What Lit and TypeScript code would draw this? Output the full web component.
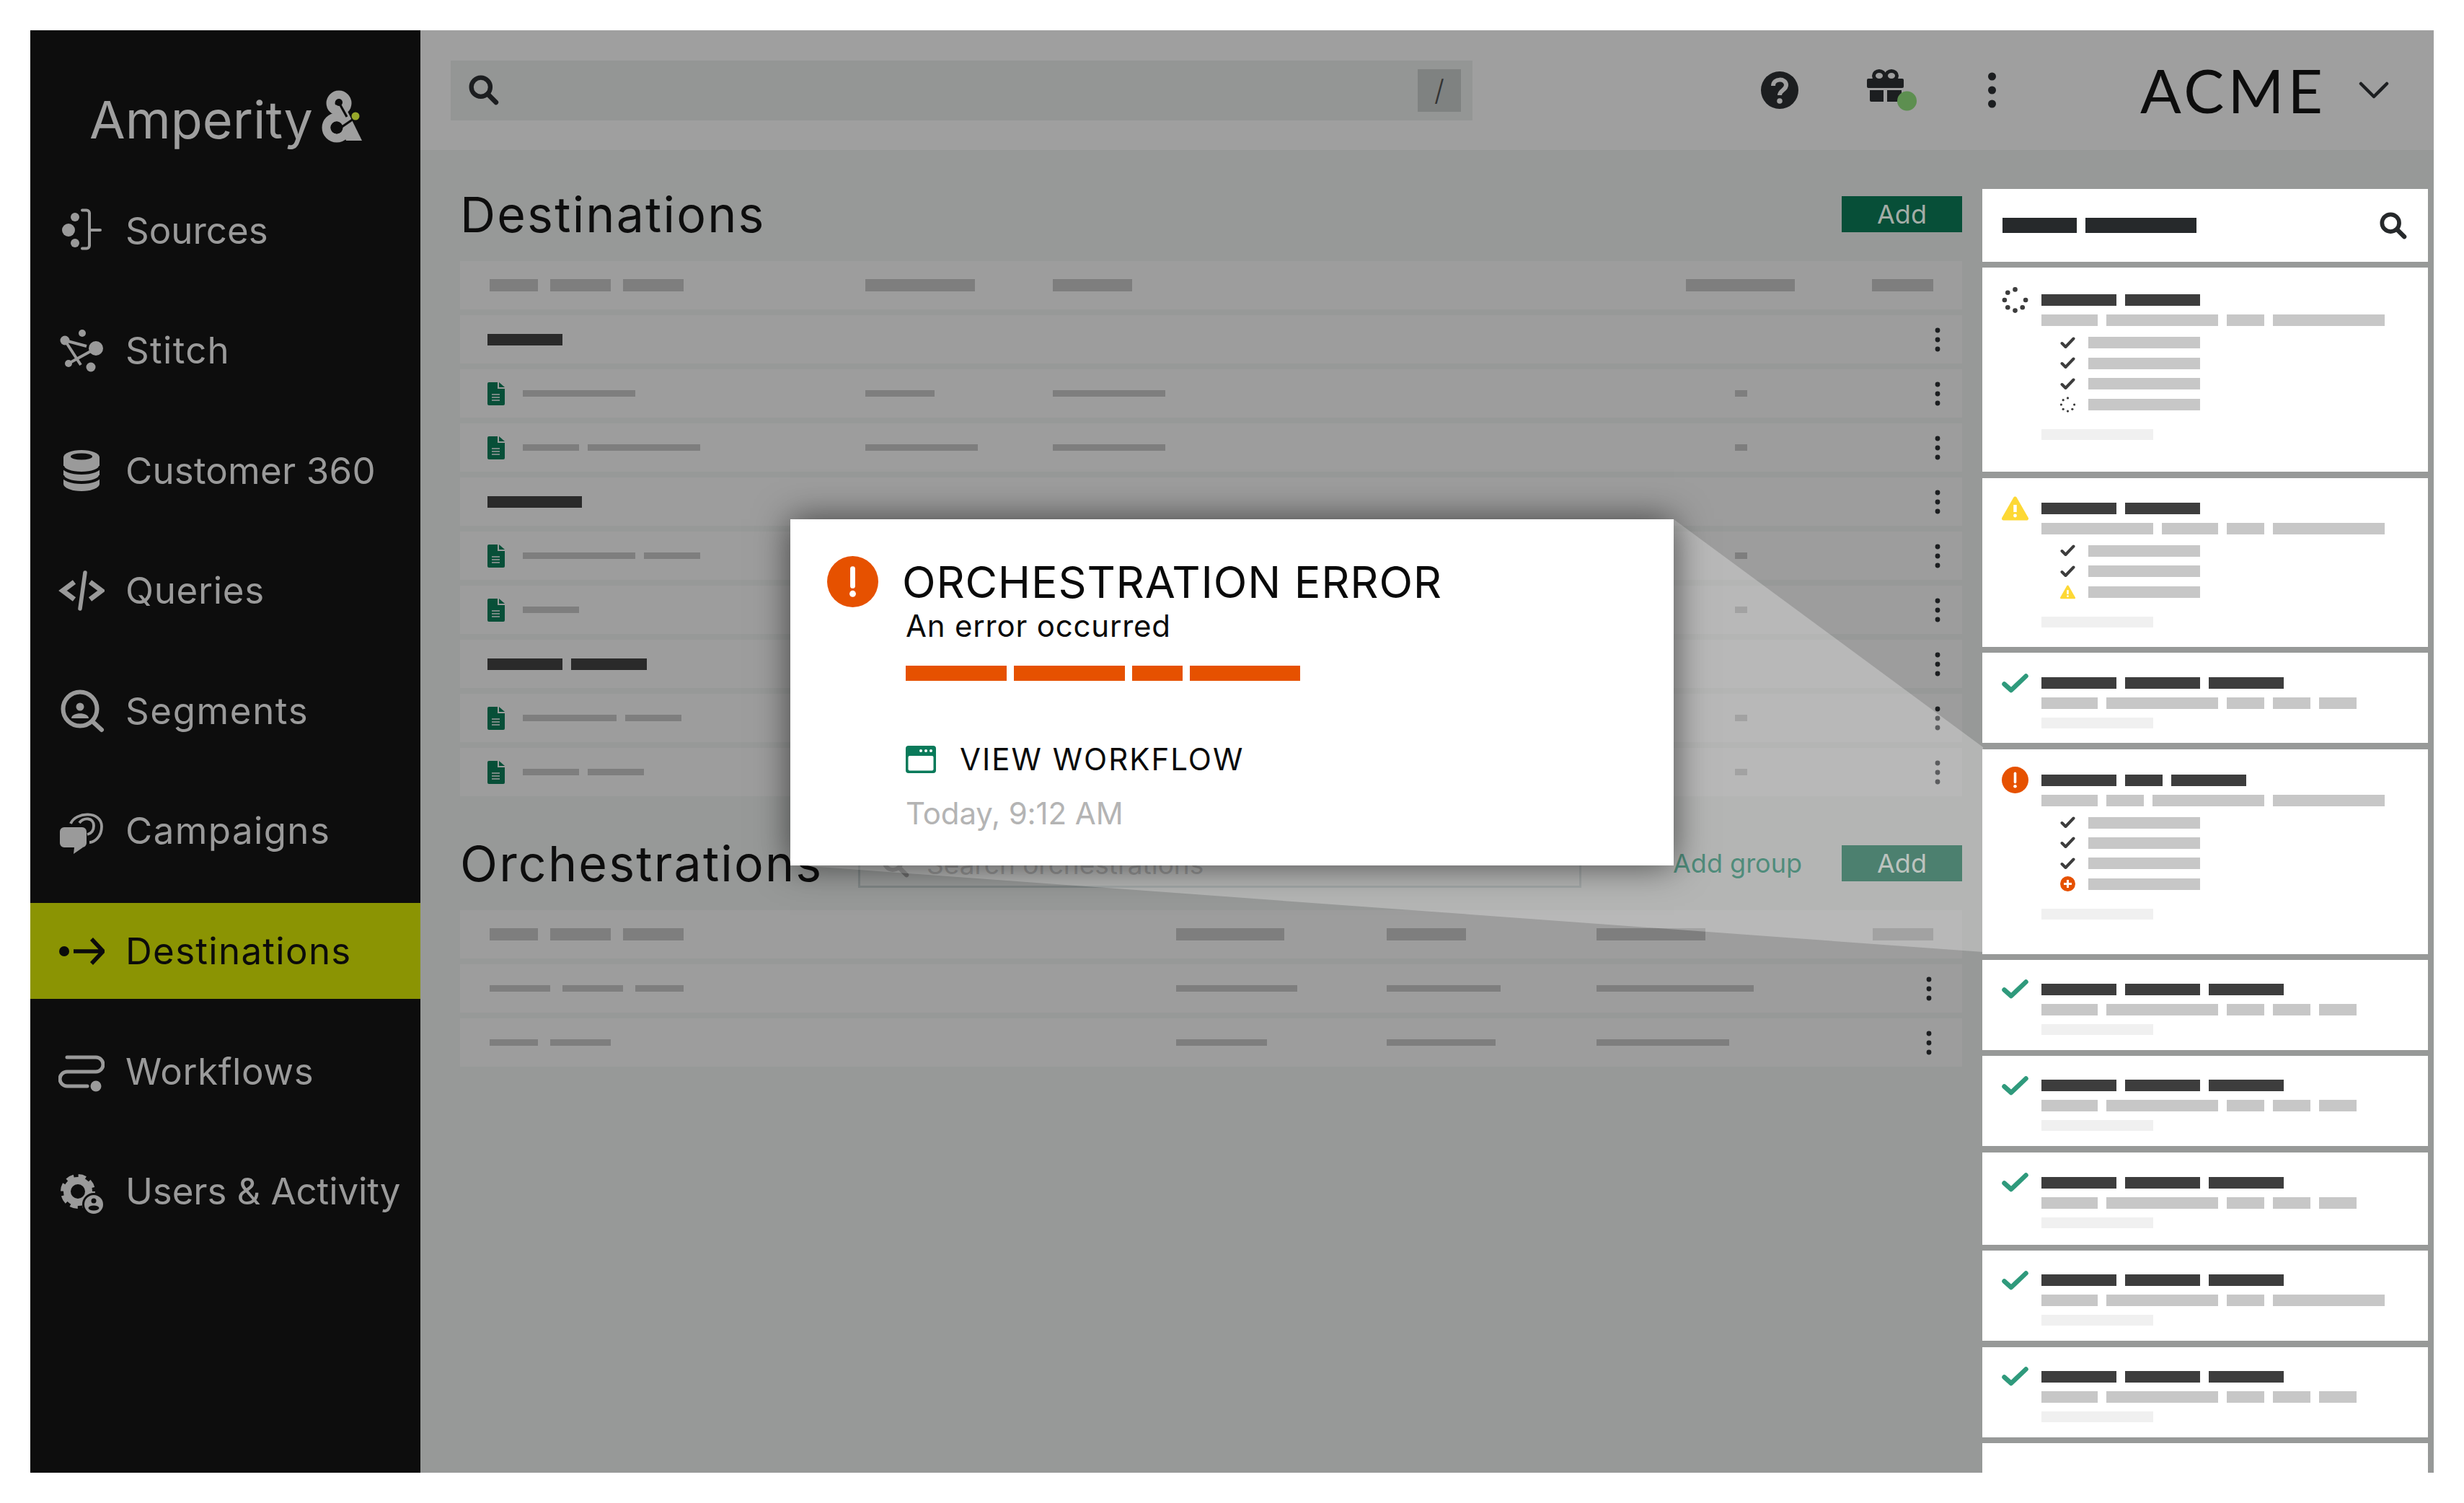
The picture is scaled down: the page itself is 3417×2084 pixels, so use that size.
import { LitElement, html, css, svg } from "lit";
import { customElement } from "lit/decorators.js";

const T = 104, S = 52, M = 78, L = 155;
type Kind = "spin" | "warn" | "ok" | "err";
type Sub = "c" | "s" | "w" | "p";
interface Card { h: number; pt: number; kind: Kind; title: number[]; sub: number[]; rows: Sub[]; }

const okSub = [M, L, S, S, S];
const cards: Card[] = [
  { h: 283, pt: 37, kind: "spin", title: [T, T], sub: [M, L, S, L], rows: ["c", "c", "c", "s"] },
  { h: 234, pt: 34, kind: "warn", title: [T, T], sub: [L, M, S, L], rows: ["c", "c", "w"] },
  { h: 125, pt: 34, kind: "ok", title: [T, T, T], sub: okSub, rows: [] },
  { h: 284, pt: 35, kind: "err", title: [T, S, T], sub: [M, S, L, L], rows: ["c", "c", "c", "p"] },
  { h: 125, pt: 33, kind: "ok", title: [T, T, T], sub: okSub, rows: [] },
  { h: 125, pt: 33, kind: "ok", title: [T, T, T], sub: okSub, rows: [] },
  { h: 128, pt: 34, kind: "ok", title: [T, T, T], sub: okSub, rows: [] },
  { h: 125, pt: 33, kind: "ok", title: [T, T, T], sub: [M, L, S, L], rows: [] },
  { h: 125, pt: 33, kind: "ok", title: [T, T, T], sub: okSub, rows: [] },
];

const G = "#9a9a9a";
const D = "#0d0d0d";
const navIcons: Record<string, any> = {
  Sources: svg`<g fill="${G}"><circle cx="21" cy="12" r="6"/><circle cx="12" cy="30" r="9"/><circle cx="21" cy="48" r="6"/></g><path d="M31 2.5h6a4 4 0 0 1 4 4v45a4 4 0 0 1-4 4h-6M41 30h15" fill="none" stroke="${G}" stroke-width="4" stroke-linecap="round"/>`,
  Stitch: svg`<g fill="${G}"><circle cx="7" cy="16" r="6.5"/><circle cx="31" cy="6" r="5"/><circle cx="50" cy="27" r="10"/><circle cx="12" cy="48" r="5"/><circle cx="43" cy="53" r="6.5"/></g><path d="M7 16l30 8M7 16l22 34M12 48l38-21" fill="none" stroke="${G}" stroke-width="4"/>`,
  "Customer 360": svg`<path d="M5 12a25 10 0 0 1 50 0v37a25 10 0 0 1-50 0z" fill="${G}"/><ellipse cx="30" cy="11" rx="15" ry="4.5" fill="${D}"/><path d="M4 24a26 10 0 0 0 52 0M4 37a26 10 0 0 0 52 0" fill="none" stroke="${D}" stroke-width="4"/>`,
  Queries: svg`<path d="M20 18L4 30l16 12M42 18l16 12-16 12" fill="none" stroke="${G}" stroke-width="7"/><path d="M35 5l-7 50" stroke="${G}" stroke-width="5.5" stroke-linecap="round"/>`,
  Segments: svg`<circle cx="28" cy="28" r="23.5" fill="none" stroke="${G}" stroke-width="6"/><circle cx="28" cy="25" r="5.5" fill="${G}"/><path d="M16 41c0-9 24-9 24 0z" fill="${G}"/><path d="M46 46l12 11" stroke="${G}" stroke-width="6" stroke-linecap="round"/>`,
  Campaigns: svg`<path d="M6 25h25a6 6 0 0 1 6 6v16a6 6 0 0 1-6 6H32l-13 9 1-9H6a6 6 0 0 1-6-6V31a6 6 0 0 1 6-6z" fill="${G}"/><path d="M15 20C22 3 58 2 58 24c0 14-10 22-17 22M27 19c6-8 20-8 20 4 0 8-5 11-9 12" fill="none" stroke="${G}" stroke-width="3.8"/>`,
  Destinations: svg`<circle cx="6" cy="30" r="7" fill="#0b0b0b"/><path d="M19 30h38M44 13l16 17-16 17" fill="none" stroke="#0b0b0b" stroke-width="5.5"/>`,
  Workflows: svg`<path d="M10 11h40a10 10 0 0 1 0 20H10a10 10 0 0 0 0 20h28" fill="none" stroke="${G}" stroke-width="5" stroke-linecap="round"/><circle cx="50" cy="51" r="7.5" fill="${G}"/>`,
  "Users & Activity": svg`<circle cx="25" cy="30" r="15" fill="none" stroke="${G}" stroke-width="10"/><circle cx="25" cy="30" r="20.5" fill="none" stroke="${G}" stroke-width="7" stroke-dasharray="10 6.1"/><circle cx="47" cy="48" r="14.5" fill="${G}" stroke="${D}" stroke-width="3"/><circle cx="47" cy="43" r="3.5" fill="${D}"/><ellipse cx="47" cy="53" rx="7.5" ry="3.5" fill="${D}"/>`,
};
const navItems = Object.keys(navIcons);
const navSpacing: Record<string, number> = {
  Sources: 0, Stitch: 1.3, "Customer 360": 0.2, Queries: 0.7, Segments: 1.6, Campaigns: 1.4,
  Destinations: 1.3, Workflows: 0.6, "Users & Activity": -0.1,
};

const ringDots = [[0, -1], [-0.7, -0.7], [-1, 0], [-0.7, 0.7], [0, 1], [0.7, 0.7], [1, 0]];
const spinner = (size: number, r: number, d: number) => html`<svg width=${size} height=${size} viewBox="-${size / 2} -${size / 2} ${size} ${size}">
  ${ringDots.map(([x, y]) => svg`<circle cx=${x * r} cy=${y * r} r=${d} fill="#3d3d3d"/>`)}</svg>`;
const warnIcon = (w: number, h: number) => html`<svg width=${w} height=${h} viewBox="0 0 37 34"><path d="M18.5 3L34.5 31H2.5z" fill="#fdd835" stroke="#fdd835" stroke-width="5" stroke-linejoin="round"/><path d="M18.5 12v10" stroke="#fff" stroke-width="4.5"/><circle cx="18.5" cy="27" r="2.4" fill="#fff"/></svg>`;
const errIcon = (s: number) => html`<svg width=${s} height=${s} viewBox="0 0 72 72"><circle cx="36" cy="36" r="36" fill="#e65100"/><path d="M36 18v24" stroke="#fff" stroke-width="7" stroke-linecap="round"/><circle cx="36" cy="53" r="4.5" fill="#fff"/></svg>`;
const mainIcon = (k: Kind) => {
  if (k === "spin") return spinner(38, 15, 3.4);
  if (k === "warn") return warnIcon(37, 34);
  if (k === "ok") return html`<svg width="37" height="27" viewBox="0 0 37 27"><path d="M3.5 14.5l9.5 8.5L33.5 3.5" fill="none" stroke="#2f9a7c" stroke-width="6.5" stroke-linecap="round" stroke-linejoin="round"/></svg>`;
  return errIcon(37);
};
const subIcon = (k: Sub) => {
  if (k === "c") return html`<svg width="21" height="17" viewBox="0 0 21 17"><path d="M2.5 9l5 5L18.5 2.5" fill="none" stroke="#3d3d3d" stroke-width="4" stroke-linecap="round" stroke-linejoin="round"/></svg>`;
  if (k === "s") return spinner(22, 9.5, 1.7);
  if (k === "w") return warnIcon(21, 20);
  return html`<svg width="21" height="21" viewBox="0 0 21 21"><circle cx="10.5" cy="10.5" r="10.5" fill="#e65100"/><path d="M10.5 5v11M5 10.5h11" stroke="#fff" stroke-width="3"/></svg>`;
};

const searchGlass = (s: number, c: string) => html`<svg width=${s} height=${s} viewBox="0 0 40 40"><circle cx="16" cy="16" r="12.5" fill="none" stroke=${c} stroke-width="6"/><path d="M26 26l10 10" stroke=${c} stroke-width="6.5" stroke-linecap="round"/></svg>`;
const fileIcon = html`<svg class="file" width="24" height="32" viewBox="0 0 24 32"><path d="M2 0h12v9h10v21a2 2 0 0 1-2 2H2a2 2 0 0 1-2-2V2a2 2 0 0 1 2-2z" fill="#074f38"/><path d="M16 0l8 7h-8z" fill="#074f38"/><path d="M6 17h11M6 21h11M6 25h11" stroke="#9c9c9c" stroke-width="1.6"/></svg>`;
const topDots = html`<svg class="dots" width="11" height="50" viewBox="0 0 11 50"><circle cx="5.5" cy="6" r="5.5"/><circle cx="5.5" cy="25" r="5.5"/><circle cx="5.5" cy="44" r="5.5"/></svg>`;
const rowDots = html`<svg class="dots" width="8" height="34" viewBox="0 0 8 34"><circle cx="4" cy="4" r="3.4"/><circle cx="4" cy="17" r="3.4"/><circle cx="4" cy="30" r="3.4"/></svg>`;

interface Row { group?: number[]; file?: boolean; name?: number[]; c2?: number; c3?: number; c4?: number; }
const destRows: Row[] = [
  { group: [104] },
  { file: true, name: [156], c2: 96, c3: 156, c4: 17 },
  { file: true, name: [78, 156], c2: 156, c3: 156, c4: 17 },
  { group: [131] },
  { file: true, name: [156, 78], c4: 17 },
  { file: true, name: [78], c4: 17 },
  { group: [104, 105] },
  { file: true, name: [130, 78], c4: 17 },
  { file: true, name: [78, 78], c4: 17 },
];

@customElement("app-root")
export class AppRoot extends LitElement {
  static styles = css`
    :host { display: block; padding: 42px; background: #fff; font-family: Inter, "Liberation Sans", sans-serif; box-sizing: border-box; }
    .frame { position: relative; width: 3333px; height: 2000px; display: flex; overflow: hidden; background: #979998; }
    .side { width: 541px; flex: none; background: #0d0d0d; color: #9a9a9a; display: flex; flex-direction: column; }
    .logo { height: 210.5px; box-sizing: border-box; padding: 86px 0 0 82px; display: flex; align-items: flex-start; }
    .logo .word { font-size: 72px; line-height: 76px; font-weight: 400; color: #9f9f9f; letter-spacing: 0; }
    .amp { flex: none; margin-left: 9px; margin-top: -4px; }
    nav { display: flex; flex-direction: column; gap: 33.6px; }
    .item { height: 133px; display: flex; align-items: center; padding-left: 39px; gap: 29px; font-size: 51px; }
    .item.on { background: #8b9403; color: #0b0b0b; }
    .item svg { flex: none; }

    .col { flex: 1; min-width: 0; display: flex; flex-direction: column; }
    .top { height: 166px; flex: none; background: #9f9f9f; display: flex; align-items: center; position: relative; }
    .sbox { margin-left: 42px; width: 1417px; height: 83px; background: #949695; display: flex; align-items: center; padding: 0 16px 0 25px; box-sizing: border-box; }
    .slash { margin-left: auto; width: 60px; height: 59px; background: #7f8281; color: #333; font-size: 40px; font-weight: 300; display: flex; align-items: center; justify-content: center; }
    .ticons { display: flex; align-items: center; margin-left: 400px; }
    .gift { margin-left: 95px; }
    .tdots { margin-left: 98px; display: flex; }
    .acme { margin-left: 200px; font-family: Lato, Inter, sans-serif; font-size: 84px; line-height: 84px; color: #0d0d0d; letter-spacing: 5px; }
    .chev { margin-left: 45px; }
    .dots circle { fill: #1c1e20; }

    .body { flex: 1; min-height: 0; display: flex; }
    .content { width: 2138px; flex: none; box-sizing: border-box; padding: 64px 0 0 55px; }
    .thead { height: 50px; display: flex; align-items: center; position: relative; }
    h1 { margin: 0; font-weight: 400; font-size: 68px; line-height: 50px; color: #0d0d0d; letter-spacing: 2.2px; white-space: nowrap; }
    .add { margin-left: auto; width: 167px; height: 50px; background: #074f38; color: #a3aca6; font-size: 36px; display: flex; align-items: center; justify-content: center; }
    .table { margin-top: 40px; display: flex; flex-direction: column; gap: 8px; }
    .table + .thead { margin-top: 68px; }
    .row { height: 67px; background: #9d9d9d; display: grid; align-items: center; padding-right: 30px; }
    .row.dest { grid-template-columns: 562px 260px 878px 257px 1fr; }
    .row.orch { grid-template-columns: 993px 292px 291px 383px 1fr; padding-right: 42px; }
    .cell { display: flex; align-items: center; gap: 12px; padding-left: 38px; }
    .row .cell ~ .cell { padding-left: 0; }
    .cell.hd { padding-left: 41px; gap: 17px; }
    .row .cell.c4 { padding-left: 68px; }
    .menu { justify-self: end; display: flex; }
    .menu.shift { margin-right: 10px; }
    .b { display: block; flex: none; }
    .b.h { height: 17px; background: #7e7e7e; }
    .b.v { height: 9px; background: #7e7e7e; }
    .b.g { height: 16px; background: #2a2a2a; }
    .file { margin-right: 13px; }
    .osearch { position: absolute; left: 552px; top: -7px; width: 1003px; height: 66px; box-sizing: border-box; border: 3px solid #7f8686; display: flex; align-items: center; padding-left: 30px; gap: 24px; color: #6c6c6c; font-size: 37px; }
    .addg { margin-left: auto; font-size: 36px; color: #0c6049; margin-right: 55px; }
    .addg + .add { margin-left: 0; }

    .panel { width: 618px; margin-left: 28px; flex: none; padding-top: 54px; display: flex; flex-direction: column; gap: 8.4px; }
    .card { background: #fff; flex: none; box-sizing: border-box; }
    .phead { height: 101px; display: flex; align-items: center; padding: 0 29px 0 28px; gap: 12px; }
    .phead i { display: block; height: 21px; background: #26292b; }
    .phead svg { margin-left: auto; }
    .pgrid { display: grid; grid-template-columns: 37px 1fr; column-gap: 18px; padding-left: 27px; }
    .cicon { height: 16px; display: flex; align-items: center; justify-content: center; }
    .bars { display: flex; gap: 12px; }
    .bars i { display: block; height: 16px; }
    .t i { background: #3d3d3d; }
    .s i { background: #c7c7c7; }
    .s { grid-column: 2; margin-top: 12px; }
    .subs { grid-column: 2; margin-top: 15px; display: flex; flex-direction: column; gap: 12.4px; }
    .sr { display: flex; align-items: center; height: 16px; padding-left: 26px; gap: 18px; }
    .sr svg { width: 21px; flex: none; }
    .sr i { display: block; width: 155px; height: 16px; background: #c7c7c7; }
    .foot { grid-column: 2; width: 155px; height: 15px; background: #f0f0f0; margin-top: 12px; }
    .subs + .foot { margin-top: 26px; }

    .wedge { position: absolute; left: 0; top: 0; pointer-events: none; }
    .modal { position: absolute; left: 1054px; top: 678px; width: 1225px; height: 480px; background: #fff; box-shadow: 0 0 46px rgba(0,0,0,.6); box-sizing: border-box; padding: 51px 0 0 51px; display: grid; grid-template-columns: 71px 1fr; column-gap: 33px; align-content: start; }
    .mtitle { font-size: 61px; line-height: 72px; color: #0a0a0a; letter-spacing: 0.8px; white-space: nowrap; }
    .mtxt { grid-column: 2; padding-left: 5px; }
    .msg { font-size: 42px; line-height: 50px; color: #0a0a0a; letter-spacing: 0.8px; }
    .mbars { display: flex; gap: 10px; margin-top: 30px; }
    .mbars i { display: block; height: 21px; background: #e65100; }
    .view { display: flex; align-items: center; gap: 33px; margin-top: 90px; font-size: 42px; line-height: 38px; color: #0a0a0a; letter-spacing: 2px; }
    .when { font-size: 42px; line-height: 50px; margin-top: 31px; color: #b4b4b4; letter-spacing: -0.1px; }
  `;

  private bars(list: number[]) {
    return list.map((w) => html`<i style="width:${w}px"></i>`);
  }

  private bs(list: number[], cls: string) {
    return list.map((w) => html`<span class="b ${cls}" style="width:${w}px"></span>`);
  }

  private destRow(r: Row) {
    return html`<div class="row dest">
      <div class="cell">${r.file ? fileIcon : ""}${r.group ? this.bs(r.group, "g") : this.bs(r.name ?? [], "v")}</div>
      <div class="cell">${r.c2 ? this.bs([r.c2], "v") : ""}</div>
      <div class="cell">${r.c3 ? this.bs([r.c3], "v") : ""}</div>
      <div class="cell c4">${r.c4 ? this.bs([r.c4], "v") : ""}</div>
      <div class="menu">${rowDots}</div>
    </div>`;
  }

  private orchRow(a: number[], b: number, c: number, d: number) {
    return html`<div class="row orch">
      <div class="cell hd">${this.bs(a, "v")}</div>
      <div class="cell">${this.bs([b], "v")}</div>
      <div class="cell">${this.bs([c], "v")}</div>
      <div class="cell">${this.bs([d], "v")}</div>
      <div class="menu">${rowDots}</div>
    </div>`;
  }

  render() {
    return html`<div class="frame">
      <aside class="side">
        <div class="logo"><span class="word">Amperity</span>
          <svg class="amp" width="60" height="74" viewBox="0 0 60 74" aria-label="Amperity mark">
            <path d="M18 27L30 12 59 71H37z" fill="#9f9f9f"/>
            <circle cx="27" cy="19" r="11.5" fill="none" stroke="#9f9f9f" stroke-width="12"/>
            <circle cx="24" cy="53" r="14.5" fill="none" stroke="#9f9f9f" stroke-width="12"/>
            <circle cx="27" cy="18" r="5" fill="#0d0d0d"/>
            <circle cx="24" cy="53" r="8.5" fill="#0d0d0d"/>
            <path d="M28 20l10 18M31 52l16-11" stroke="#0d0d0d" stroke-width="3.2"/>
            <circle cx="50" cy="37" r="5.5" fill="#98a82a"/>
          </svg>
        </div>
        <nav>${navItems.map((n) => html`<div class="item ${n === "Destinations" ? "on" : ""}">
          <svg width="64" height="64" viewBox="-2 -2 64 64">${navIcons[n]}</svg><span style="letter-spacing:${navSpacing[n]}px">${n}</span></div>`)}</nav>
      </aside>
      <div class="col">
        <header class="top">
          <div class="sbox">${searchGlass(42, "#1c1e20")}<span class="slash">/</span></div>
          <div class="ticons">
            <svg width="52" height="52" viewBox="0 0 52 52"><circle cx="26" cy="26" r="26" fill="#1c1e20"/><path d="M17 20c0-11 18-11 18-1 0 7-9 7-9 14" fill="none" stroke="#9f9f9f" stroke-width="6"/><circle cx="26" cy="41" r="3.8" fill="#9f9f9f"/></svg>
            <svg class="gift" width="70" height="58" viewBox="0 0 70 58"><ellipse cx="17" cy="9" rx="7.5" ry="6.5" fill="none" stroke="#1c1e20" stroke-width="5"/><ellipse cx="34" cy="9" rx="7.5" ry="6.5" fill="none" stroke="#1c1e20" stroke-width="5"/><rect x="0" y="13" width="51" height="13" rx="2" fill="#1c1e20"/><path d="M4 29h19v16H6a2 2 0 0 1-2-2zM28 29h20v14a2 2 0 0 1-2 2H28z" fill="#1c1e20"/><circle cx="55.500" cy="44" r="13.500" fill="#5d8f50"/></svg>
            <span class="tdots">${topDots}</span>
          </div>
          <span class="acme">ACME</span>
          <svg class="chev" width="42" height="24" viewBox="0 0 42 24"><path d="M3 3l18 18L39 3" fill="none" stroke="#1c1e20" stroke-width="4.5" stroke-linecap="round" stroke-linejoin="round"/></svg>
        </header>
        <div class="body">
          <main class="content">
            <div class="thead"><h1>Destinations</h1><span class="add">Add</span></div>
            <div class="table">
              <div class="row dest">
                <div class="cell hd">${this.bs([67, 84, 84], "h")}</div>
                <div class="cell">${this.bs([152], "h")}</div>
                <div class="cell">${this.bs([110], "h")}</div>
                <div class="cell">${this.bs([151], "h")}</div>
                <div class="menu shift">${this.bs([85], "h")}</div>
              </div>
              ${destRows.map((r) => this.destRow(r))}
            </div>
            <div class="thead"><h1>Orchestrations</h1>
              <div class="osearch">${searchGlass(38, "#6c6c6c")}<span>Search orchestrations</span></div>
              <span class="addg">Add group</span><span class="add">Add</span></div>
            <div class="table">
              <div class="row orch">
                <div class="cell hd">${this.bs([67, 84, 84], "h")}</div>
                <div class="cell">${this.bs([150], "h")}</div>
                <div class="cell">${this.bs([110], "h")}</div>
                <div class="cell">${this.bs([151], "h")}</div>
                <div class="menu">${this.bs([84], "h")}</div>
              </div>
              ${this.orchRow([84, 84, 67], 168, 158, 218)}
              ${this.orchRow([67, 84], 126, 151, 184)}
            </div>
          </main>
          <section class="panel">
            <div class="card phead">${this.bars([103, 154])}${searchGlass(38, "#26292b")}</div>
            ${cards.map((c) => html`<div class="card" style="height:${c.h}px;padding-top:${c.pt}px"><div class="pgrid">
              <div class="cicon">${mainIcon(c.kind)}</div>
              <div class="bars t">${this.bars(c.title)}</div>
              <div class="bars s">${this.bars(c.sub)}</div>
              ${c.rows.length ? html`<div class="subs">${c.rows.map((k) => html`<div class="sr">${subIcon(k)}<i></i></div>`)}</div>` : ""}
              <div class="foot"></div>
            </div></div>`)}
            <div class="card" style="height:60px"></div>
          </section>
        </div>
      </div>
      <svg class="wedge" width="3333" height="2000"><polygon points="2279,678 2708,994 2708,1278 1054,1157" fill="#fff" fill-opacity=".28"/></svg>
      <div class="modal">
        ${errIcon(71)}
        <div class="mtitle">ORCHESTRATION ERROR</div>
        <div class="mtxt">
          <div class="msg">An error occurred</div>
          <div class="mbars">${this.bars([140, 154, 70, 153])}</div>
          <div class="view"><svg width="42" height="38" viewBox="0 0 42 38"><rect width="42" height="38" rx="4" fill="#0a7a5a"/><rect x="3.5" y="14" width="35" height="20.5" rx="2" fill="#fff"/><circle cx="21" cy="7" r="2" fill="#fff"/><circle cx="28" cy="7" r="2" fill="#fff"/><circle cx="35" cy="7" r="2" fill="#fff"/></svg><span>VIEW WORKFLOW</span></div>
          <div class="when">Today, 9:12 AM</div>
        </div>
      </div>
    </div>`;
  }
}
